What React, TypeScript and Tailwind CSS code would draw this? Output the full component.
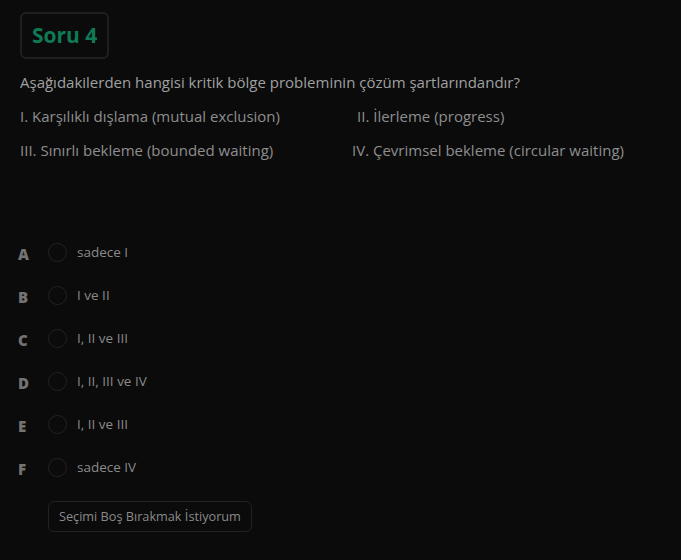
const choices = [
  { key: "A", text: "sadece I" },
  { key: "B", text: "I ve II" },
  { key: "C", text: "I, II ve III" },
  { key: "D", text: "I, II, III ve IV" },
  { key: "E", text: "I, II ve III" },
  { key: "F", text: "sadece IV" },
];

export default function App() {
  return (
    <div
      className="min-h-screen w-full bg-[#0b0b0b] px-5 pt-3 text-[#9a9a9a]"
      style={{ fontFamily: '"Open Sans", "Liberation Sans", sans-serif' }}
    >
      {/* Title */}
      <div className="inline-flex h-[47px] items-center rounded-md border-2 border-[#1f1f1f] px-[10px]">
        <span className="text-[21px] font-bold text-[#0f7a56]">Soru 4</span>
      </div>

      {/* Question */}
      <p className="mt-[13px] text-[15px] leading-[20px] text-[#a0a0a0]">
        Aşağıdakilerden hangisi kritik bölge probleminin çözüm şartlarındandır?
      </p>

      <div className="mt-[14px] grid grid-cols-[332px_auto] gap-y-[14px] text-[15px] leading-[20px] text-[#8e8e8e]">
        <span>I. Karşılıklı dışlama (mutual exclusion)</span>
        <span className="pl-[5px]">II. İlerleme (progress)</span>
        <span>III. Sınırlı bekleme (bounded waiting)</span>
        <span>IV. Çevrimsel bekleme (circular waiting)</span>
      </div>

      {/* Choices */}
      <div className="mt-[83px] flex flex-col gap-[25px]">
        {choices.map((c) => (
          <div key={c.key} className="-ml-[2px] flex h-[18px] items-center">
            <span className="mt-[4px] w-[30px] text-[15px] font-extrabold text-[#737373]">
              {c.key}
            </span>
            <span className="h-[19px] w-[19px] rounded-full border border-[#222222]" />
            <span className="ml-[10px] text-[13.5px] font-medium text-[#8a8a8a]">
              {c.text}
            </span>
          </div>
        ))}
      </div>

      <button className="ml-[28px] mt-[25px] h-[31px] rounded-md border border-[#222222] px-[10px] text-[12.7px] text-[#8a8a8a]">
        Seçimi Boş Bırakmak İstiyorum
      </button>
    </div>
  );
}
